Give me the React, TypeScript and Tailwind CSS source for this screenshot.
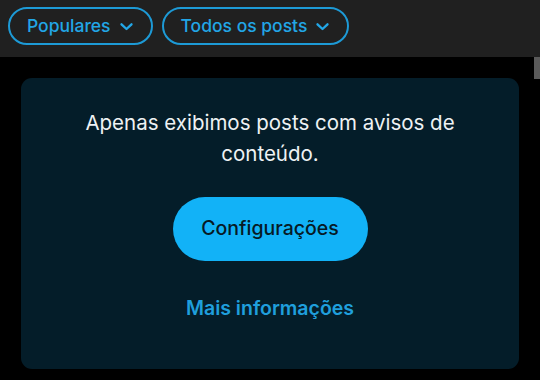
import React from "react";

const Chevron = () => (
  <svg width="15" height="15" viewBox="0 0 24 24" fill="none" stroke="currentColor" strokeWidth="3.8" strokeLinecap="round" strokeLinejoin="round">
    <path d="M4 8.5l8 7.5 8-7.5" />
  </svg>
);

const FilterPill = ({ label }: { label: string }) => (
  <button className="flex h-[38px] items-center gap-[8px] rounded-full border-2 border-[#1d9ad6] pl-[17px] pr-[17px] text-[17.5px] font-medium text-[#22a6e6]">
    {label}
    <Chevron />
  </button>
);

export default function App() {
  return (
    <div className="relative flex h-[380px] w-[540px] flex-col overflow-hidden bg-black" style={{ fontFamily: "Inter, 'Noto Sans', sans-serif" }}>
      {/* Filters */}
      <div className="flex h-[57px] items-start gap-[9px] bg-[#202020] pl-[8px] pt-[7px]">
        <FilterPill label="Populares" />
        <FilterPill label="Todos os posts" />
      </div>

      {/* scrollbar thumb */}
      <div className="absolute right-0 top-[57px] h-[22px] w-[6px] bg-[#5a5a5a]" />

      {/* Notice card */}
      <div className="mx-[21px] mt-[21px] flex h-[291px] flex-col items-center rounded-[11px] bg-[#041d29] pt-[29px]">
        <p className="w-[420px] text-center text-[20.5px] leading-[31px] text-[#eef2f4]">
          Apenas exibimos posts com avisos de conteúdo.
        </p>
        <button className="mt-[28px] h-[64px] w-[195px] rounded-full bg-[#12b2f7] text-[19.5px] font-medium text-[#071a25]">
          Configurações
        </button>
        <button className="mt-[33px] text-[19.5px] font-semibold text-[#1f9fdc]">
          Mais informações
        </button>
      </div>
    </div>
  );
}
